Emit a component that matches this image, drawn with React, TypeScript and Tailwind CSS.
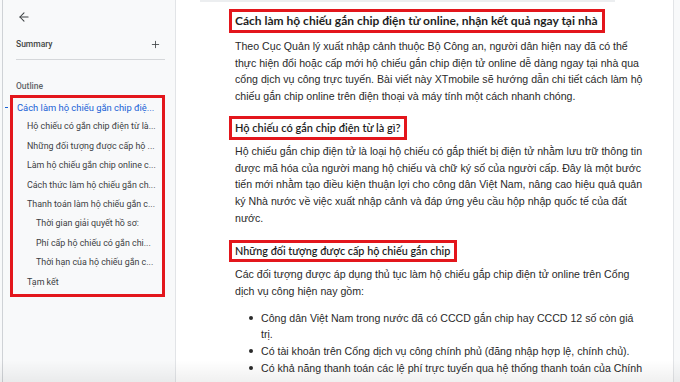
import React from "react";
import { ArrowLeft, Plus } from "lucide-react";

const P = ({ lines, className = "" }: { lines: string[]; className?: string }) => (
  <div className={"text-[10.6px] leading-[16.7px] text-[#2a2a2a] " + className} style={{ fontFamily: '"Liberation Sans", Arial, sans-serif' }}>
    {lines.map((l, i) => (
      <div key={i} className={i < lines.length - 1 ? "text-justify [text-align-last:justify] whitespace-nowrap" : "whitespace-nowrap"}>
        {l}
      </div>
    ))}
  </div>
);

const H = ({ children, className = "" }: { children: React.ReactNode; className?: string }) => (
  <div className={"self-start whitespace-nowrap border-[3px] border-[#e3161c] pl-[3px] pr-[4px] flex items-center text-[#1f1f1f] " + className} style={{ fontFamily: 'Lato, "Open Sans", sans-serif' }}>
    {children}
  </div>
);

const outline: { t: string; lvl: number }[] = [
  { t: "Hộ chiếu có gắn chip điện từ là...", lvl: 1 },
  { t: "Những đối tượng được cấp hộ ...", lvl: 1 },
  { t: "Làm hộ chiếu gắn chip online c...", lvl: 1 },
  { t: "Cách thức làm hộ chiếu gắn ch...", lvl: 1 },
  { t: "Thanh toán làm hộ chiếu gắn c...", lvl: 1 },
  { t: "Thời gian giải quyết hồ sơ:", lvl: 2 },
  { t: "Phí cấp hộ chiếu có gắn chi...", lvl: 2 },
  { t: "Thời hạn của hộ chiếu gắn c...", lvl: 2 },
  { t: "Tạm kết", lvl: 1 },
];

export default function App() {
  return (
    <div className="relative flex h-[382px] w-[680px] overflow-hidden bg-white" style={{ fontFamily: 'Roboto, "Liberation Sans", sans-serif' }}>
      <div className="w-[3px] shrink-0 bg-[#f8f9fa] border-r border-[#cfd2d6]" />
      {/* Sidebar */}
      <div className="w-[173px] shrink-0 bg-[#f8f9fa] border-r border-[#e2e4e7] flex flex-col">
        <div className="h-[34px] flex items-center pl-[14px]">
          <ArrowLeft size={14} strokeWidth={1.8} className="text-[#3c4043]" />
        </div>
        <div className="h-[20px] flex items-center justify-between pl-[13px] pr-[14px]">
          <span className="text-[8.5px] font-medium text-[#444746]">Summary</span>
          <Plus size={11} strokeWidth={1.8} className="text-[#3c4043]" />
        </div>
        <div className="ml-[13px] mr-[10px] mt-[5px] h-px bg-[#d5d7da]" />
        <div className="h-[20px] mt-[16px] flex items-center pl-[13px]">
          <span className="text-[8.5px] font-medium text-[#5f6368]">Outline</span>
        </div>
        <div className="ml-[7px] w-[155px] mt-[-1px] border-[3px] border-[#e3161c] pb-[2px] pl-[4px] flex flex-col">
          <div className="relative h-[19.4px] flex items-center text-[9.4px] text-[#1a62d6] whitespace-nowrap">
            <span className="absolute left-[-12px] top-[9px] w-[3px] h-px bg-[#1a62d6]" />
            Cách làm hộ chiếu gắn chip điệ...
          </div>
          {outline.map((o, i) => (
            <div key={i} className={"h-[19.4px] flex items-center text-[8.9px] text-[#3c4043] whitespace-nowrap overflow-hidden " + (o.lvl === 2 ? "pl-[19px]" : "pl-[10px]")}>
              {o.t}
            </div>
          ))}
        </div>
      </div>
      {/* Document */}
      <div className="flex-1 bg-white flex flex-col pl-[53px] overflow-hidden">
        <div className="ml-[-29px] w-[415px] h-[2px] bg-[#eceef0]" />
        <div className="flex flex-col w-[388px]">
          <H className="mt-[7px] h-[24px] text-[12px] font-bold">Cách làm hộ chiếu gắn chip điện tử online, nhận kết quả ngay tại nhà</H>
          <P
            className="ml-[6px] mt-[5px] w-[381px]"
            lines={[
              "Theo Cục Quản lý xuất nhập cảnh thuộc Bộ Công an, người dân hiện nay đã có thể",
              "thực hiện đổi hoặc cấp mới hộ chiếu gắn chip điện tử online dễ dàng ngay tại nhà qua",
              "cổng dịch vụ công trực tuyến. Bài viết này XTmobile sẽ hướng dẫn chi tiết cách làm hộ",
              "chiếu gắn chip online trên điện thoại và máy tính một cách nhanh chóng.",
            ]}
          />
          <H className="mt-[11px] h-[24px] text-[11px] font-semibold">Hộ chiếu có gắn chip điện từ là gì?</H>
          <P
            className="ml-[6px] mt-[3px] w-[381px]"
            lines={[
              "Hộ chiếu gắn chip điện tử là loại hộ chiếu có gắp thiết bị điện tử nhằm lưu trữ thông tin",
              "được mã hóa của người mang hộ chiếu và chữ ký số của người cấp. Đây là một bước",
              "tiến mới nhằm tạo điều kiện thuận lợi cho công dân Việt Nam, nâng cao hiệu quả quản",
              "ký Nhà nước về việc xuất nhập cảnh và đáp ứng yêu cầu hộp nhập quốc tế của đất",
              "nước.",
            ]}
          />
          <H className="mt-[14px] h-[22px] text-[10.8px] font-semibold">Những đối tượng được cấp hộ chiếu gắn chip</H>
          <P
            className="ml-[6px] mt-[4px] w-[381px]"
            lines={[
              "Các đối tượng được áp dụng thủ tục làm hộ chiếu gắp chip điện tử online trên Cổng",
              "dịch vụ công hiện nay gồm:",
            ]}
          />
          <div className="mt-[10px] ml-[20px] flex flex-col">
            {[
              ["Công dân Việt Nam trong nước đã có CCCD gắn chip hay CCCD 12 số còn giá", "trị."],
              ["Có tài khoản trên Cổng dịch vụ công chính phủ (đăng nhập hợp lệ, chính chủ)."],
              ["Có khả năng thanh toán các lệ phí trực tuyến qua hệ thống thanh toán của Chính"],
            ].map((b, i) => (
              <div key={i} className="flex">
                <div className="w-[12px] shrink-0 h-[16.5px] flex items-center">
                  <span className="w-[4px] h-[4px] rounded-full bg-[#2a2a2a]" />
                </div>
                <P className="w-[352px]" lines={b} />
              </div>
            ))}
          </div>
        </div>
      </div>
      <div className="w-[7px] shrink-0 bg-[#f8f9fa] border-l border-[#e2e4e7]" />
      <div className="pointer-events-none absolute bottom-0 left-0 right-0 h-[22px] bg-gradient-to-b from-transparent to-[rgba(0,0,0,0.06)]" />
    </div>
  );
}
